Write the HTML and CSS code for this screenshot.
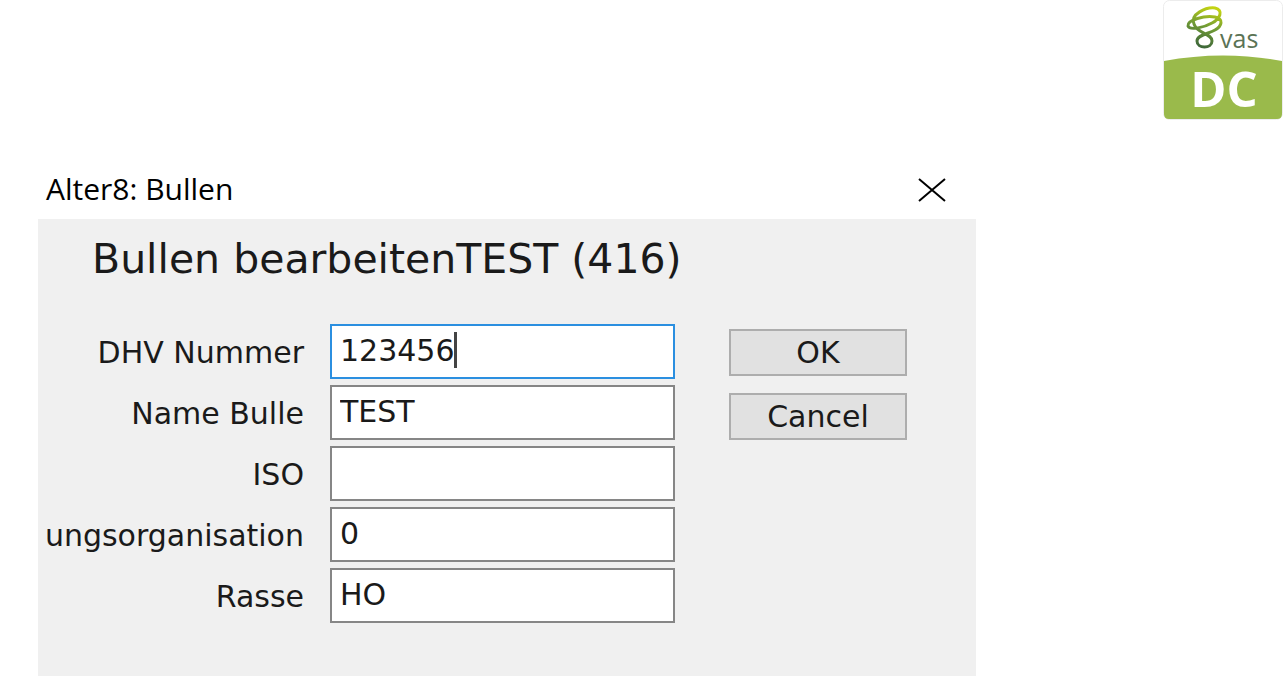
FILE: index.html
```html
<!DOCTYPE html>
<html lang="de">
<head>
    <meta charset="UTF-8">
    <meta name="viewport" content="width=device-width, initial-scale=1.0">
    <title>Alter8: Bullen</title>
    <link rel="stylesheet" href="styles.css">
</head>
<body>
    <header class="page-header">
        <svg class="logo" viewBox="0 0 120 120" role="img" aria-label="vas DC">
            <defs>
                <linearGradient id="swirl" gradientUnits="userSpaceOnUse" x1="50" y1="8" x2="38" y2="46">
                    <stop offset="0" stop-color="#c3d312"/>
                    <stop offset="0.5" stop-color="#6f9a35"/>
                    <stop offset="1" stop-color="#40693a"/>
                </linearGradient>
            </defs>
            <rect x="0.5" y="0.5" width="119" height="119" rx="6" fill="#fff" stroke="#ececec"/>
            <path d="M1 61 Q60 50 119 61 V114 Q119 119 114 119 H6 Q1 119 1 114 Z" fill="#9aba4b"/>
            <g fill="none" stroke="url(#swirl)" stroke-width="3">
                <path d="M31 24 C27 14 43 7 52 8 C61 10 57 19 49 23 C42 27 27 31 25 26 C24 20 42 15 52 17 C61 19 59 26 52 30 C45 34 34 35 34 41 C34 49 49 49 49 41 C49 33 34 34 31 24 Z"/>
            </g>
            <text class="logo-vas" x="57" y="48">vas</text>
            <text class="logo-dc" x="61" y="107">DC</text>
        </svg>
    </header>

    <main class="dialog">
        <div class="title-bar">
            <span class="title">Alter8: Bullen</span>
            <button type="button" class="close-btn" aria-label="Close">
                <svg width="28" height="24" viewBox="0 0 28 24">
                    <path d="M1 1 L27 23 M27 1 L1 23" stroke="#000" stroke-width="2"/>
                </svg>
            </button>
        </div>
        <form class="panel">
            <h1>Bullen bearbeitenTEST (416)</h1>
            <div class="columns">
                <div class="fields">
                    <div class="field">
                        <label for="dhv">DHV Nummer</label>
                        <div class="input-wrap">
                            <input class="active" type="text" id="dhv" value="123456">
                            <span class="caret"></span>
                        </div>
                    </div>
                    <div class="field">
                        <label for="name">Name Bulle</label>
                        <input type="text" id="name" value="TEST">
                    </div>
                    <div class="field">
                        <label for="iso">ISO</label>
                        <input type="text" id="iso">
                    </div>
                    <div class="field">
                        <label for="org">ungsorganisation</label>
                        <input type="text" id="org" value="0">
                    </div>
                    <div class="field">
                        <label for="rasse">Rasse</label>
                        <input type="text" id="rasse" value="HO">
                    </div>
                </div>
                <div class="buttons">
                    <button type="submit" class="btn">OK</button>
                    <button type="button" class="btn">Cancel</button>
                </div>
            </div>
        </form>
    </main>
</body>
</html>
```
FILE: styles.css
```css
* {
    box-sizing: border-box;
}
body {
    font-family: "DejaVu Sans", Verdana, sans-serif;
    background-color: #fff;
    color: #1a1a1a;
    margin: 0;
}
.page-header {
    display: flex;
    justify-content: flex-end;
}
.logo {
    width: 120px;
    height: 120px;
}
.logo-vas {
    font-family: "Open Sans", sans-serif;
    font-size: 25px;
    fill: #5b7355;
}
.logo-dc {
    font-family: "Open Sans", sans-serif;
    font-size: 49px;
    font-weight: bold;
    fill: #fff;
    text-anchor: middle;
}
.dialog {
    max-width: 938px;
    margin: 41px 38px 20px;
}
.title-bar {
    display: flex;
    justify-content: space-between;
    align-items: center;
    height: 58px;
    padding: 0 14px 0 8px;
    font-family: "Open Sans", sans-serif;
    font-size: 30px;
    color: #000;
}
.title {
    padding-bottom: 4px;
}
.close-btn {
    display: flex;
    justify-content: center;
    align-items: center;
    width: 60px;
    height: 40px;
    padding: 0;
    border: none;
    background: none;
}
.panel {
    padding: 16px 0 53px;
    background-color: #f0f0f0;
}
h1 {
    margin: 0 0 40px 54px;
    font-size: 41px;
    font-weight: normal;
    line-height: 49px;
}
.columns {
    display: flex;
    gap: 54px;
    padding-right: 69px;
}
.fields {
    display: flex;
    flex-direction: column;
    gap: 6px;
    flex: 1;
    min-width: 0;
}
.field {
    display: grid;
    grid-template-columns: 266px minmax(0, 1fr);
    gap: 26px;
    align-items: center;
}
label {
    padding-top: 2px;
    font-size: 30px;
    text-align: right;
    white-space: nowrap;
}
input {
    width: 100%;
    height: 55px;
    padding: 0 8px 2px;
    border: 2px solid #868686;
    border-radius: 0;
    background-color: #fff;
    color: #1a1a1a;
    font-family: inherit;
    font-size: 30px;
    outline: none;
}
input.active {
    border-color: #2b8fe0;
}
.input-wrap {
    position: relative;
}
.caret {
    position: absolute;
    top: 8px;
    left: 124px;
    width: 3px;
    height: 36px;
    background-color: #444;
}
.buttons {
    display: flex;
    flex-direction: column;
    gap: 17px;
    padding-top: 5px;
}
.btn {
    width: 178px;
    height: 47px;
    padding: 0;
    border: 2px solid #adadad;
    background-color: #e1e1e1;
    color: #1a1a1a;
    font-family: inherit;
    font-size: 30px;
}
```
